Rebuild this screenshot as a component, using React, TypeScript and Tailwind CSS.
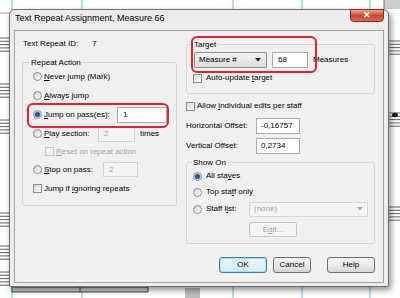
import React from "react";

const font = "font-['Liberation_Sans',Arial,sans-serif]";

function Radio({ checked = false }: { checked?: boolean }) {
  return (
    <span className="flex h-[9px] w-[9px] shrink-0 items-center justify-center rounded-full border border-[#8c8c8c] bg-linear-to-br from-[#d4d4d4] to-[#fbfbfb]">
      {checked && <span className="h-[5px] w-[5px] rounded-full bg-[#2a568c] shadow-[0_0_1px_1px_#9cc8e6]" />}
    </span>
  );
}

function Check({ disabled = false }: { disabled?: boolean }) {
  return disabled ? (
    <span className="h-[9px] w-[9px] shrink-0 border border-[#c8c8c8] bg-[#f2f2f2]" />
  ) : (
    <span className="h-[9px] w-[9px] shrink-0 border border-[#8c8c8c] bg-linear-to-br from-[#d8d8d8] to-[#fdfdfd]" />
  );
}

function U({ children }: { children: React.ReactNode }) {
  return <span className="underline decoration-[0.6px] underline-offset-[1px]">{children}</span>;
}

function Arrow({ color = "#222" }: { color?: string }) {
  return (
    <svg width="6" height="4" viewBox="0 0 6 4">
      <polygon points="0,0 6,0 3,3.5" fill={color} />
    </svg>
  );
}

function Score() {
  const staff = (x1: number, x2: number, y: number, k: string) =>
    [0, 1, 2, 3, 4].map((i) => (
      <line key={`${k}-${i}`} x1={x1} x2={x2} y1={y + i * 3.3} y2={y + i * 3.3} stroke="#3a3a3a" strokeWidth="0.8" />
    ));
  return (
    <svg className="absolute inset-0" width="400" height="298">
      <rect width="400" height="298" fill="#ffffff" />
      {[12, 82, 233, 302, 370].map((x) => (
        <line key={x} x1={x} x2={x} y1="0" y2="298" stroke="#62c9cf" strokeWidth="1" />
      ))}
      <line x1="0" x2="12" y1="13" y2="13" stroke="#888" strokeWidth="0.8" />
      {staff(0, 12, 38, "a")}
      {staff(0, 12, 84, "b")}
      {staff(0, 12, 120, "c")}
      {staff(0, 12, 213, "d")}
      {staff(0, 12, 246, "e")}
      {staff(0, 12, 272, "f")}
      {staff(386, 400, 41, "g")}
      {staff(386, 400, 113, "h")}
      {staff(386, 400, 207, "i")}
      <ellipse cx="395" cy="115" rx="3" ry="2.2" fill="#111" />
      <rect x="384" y="0" width="16" height="9" fill="#cfcfcf" />
      <line x1="384" x2="384" y1="0" y2="9" stroke="#777" />
      <rect x="12" y="287" width="136" height="5" fill="#cfcfcf" stroke="#222" strokeWidth="0.8" />
      <line x1="80" x2="80" y1="287" y2="292" stroke="#222" strokeWidth="0.8" />
      <rect x="185" y="288" width="15" height="10" fill="#bdbdbd" />
    </svg>
  );
}

export default function App() {
  return (
    <div className={`relative h-[298px] w-[400px] overflow-hidden bg-white text-[8px] leading-none text-black ${font}`}>
      <Score />
      <div className="absolute left-[9px] top-[9px] flex h-[278px] w-[380px] flex-col rounded-t-[6px] rounded-b-[2px] border border-[#707070] bg-[#ebecee] shadow-[2px_3px_6px_rgba(0,0,0,0.45)]">
        {/* title bar */}
        <div className="flex h-[20px] items-start justify-between">
          <span className="ml-[5px] mt-[3px] text-[9px] leading-[11px]">Text Repeat Assignment, Measure 66</span>
          <div className="-mt-px mr-[4px] flex h-[13px] w-[34px] items-center justify-center rounded-b-[4px] border border-[#8b2a1a] bg-linear-to-b from-[#eaa595] via-[#c9462f] to-[#d86a50] text-[9px] font-bold text-white">
            ✕
          </div>
        </div>
        {/* client */}
        <div className="mx-[4px] flex h-[253px] w-[370px] flex-col border border-[#a2a2a2] bg-[#f0f0f0]">
          <div className="flex pl-[7px] pt-[7px]">
            {/* left column */}
            <div className="flex w-[155px] flex-col">
              <div className="flex h-[12px] items-center pl-[1px]">
                <span>Text Repeat ID:</span>
                <span className="ml-[14px]">7</span>
              </div>
              <div className="relative mt-[12px] flex h-[144px] flex-col rounded-[3px] border border-[#d5d5d5] pl-[10px] pt-[4px]">
                <span className="absolute -top-[6px] left-[7px] bg-[#f0f0f0] px-[1px] leading-[11px]">Repeat Action</span>
                <div className="flex h-[19px] items-center gap-[2px]">
                  <Radio />
                  <span><U>N</U>ever jump (Mark)</span>
                </div>
                <div className="flex h-[19px] items-center gap-[2px]">
                  <Radio />
                  <span><U>A</U>lways jump</span>
                </div>
                <div className="flex h-[19px] items-center gap-[2px]">
                  <Radio checked />
                  <span className="w-[71px]"><U>J</U>ump on pass(es):</span>
                  <span className="flex h-[16px] w-[50px] items-center border border-[#abadb3] bg-white pl-[5px]">1</span>
                </div>
                <div className="flex h-[19px] items-center gap-[2px]">
                  <Radio />
                  <span className="w-[52px]"><U>P</U>lay section:</span>
                  <span className="flex h-[16px] w-[37px] items-center border border-[#d3d3d3] bg-[#f4f4f4] pl-[5px] text-[#a3a3a3]">2</span>
                  <span className="ml-[3px]">times</span>
                </div>
                <div className="flex h-[17px] items-center gap-[2px] pl-[12px]">
                  <Check disabled />
                  <span className="text-[#a3a3a3]"><U>R</U>eset on repeat action</span>
                </div>
                <div className="flex h-[19px] items-center gap-[2px]">
                  <Radio />
                  <span className="w-[57px]"><U>S</U>top on pass:</span>
                  <span className="flex h-[15px] w-[35px] items-center border border-[#d3d3d3] bg-[#f4f4f4] pl-[5px] text-[#a3a3a3]">2</span>
                </div>
                <div className="flex h-[19px] items-center gap-[2px]">
                  <Check />
                  <span>Jump if <U>i</U>gnoring repeats</span>
                </div>
                <div className="absolute left-[4px] top-[40px] h-[25px] w-[142px] rounded-[6px] border-2 border-[#e0262c]" />
              </div>
            </div>
            {/* right column */}
            <div className="relative ml-[9px] flex w-[189px] flex-col">
              <div className="relative mt-[6px] flex h-[50px] flex-col rounded-[3px] border border-[#d5d5d5] pl-[6px] pt-[7px]">
                <span className="absolute -top-[6px] left-[6px] bg-[#f0f0f0] px-[1px] leading-[11px]">Target</span>
                <div className="flex h-[16px] items-center">
                  <div className="ml-[1px] flex h-[16px] w-[73px] items-center justify-between rounded-[2px] border border-[#8e8f8f] bg-linear-to-b from-[#f4f4f4] to-[#dcdcdc] pl-[4px] pr-[5px]">
                    <span>Measure #</span>
                    <Arrow />
                  </div>
                  <span className="ml-[5px] flex h-[16px] w-[36px] items-center border border-[#abadb3] bg-white pl-[5px]">68</span>
                  <span className="ml-[5px]">Measures</span>
                </div>
                <div className="mt-[3px] flex h-[14px] items-center gap-[4px]">
                  <Check />
                  <span>Auto-update <U>t</U>arget</span>
                </div>
              </div>
              <div className="absolute left-[5px] -top-[2px] h-[37px] w-[126px] rounded-[6px] border-2 border-[#e0262c]" />
              <div className="mt-[6px] flex h-[12px] items-center gap-[2px]">
                <Check />
                <span>Allow <U>i</U>ndividual edits per staff</span>
              </div>
              <div className="mt-[6px] flex h-[16px] items-center">
                <span className="w-[70px]">Horizontal Offset:</span>
                <span className="flex h-[16px] w-[44px] items-center border border-[#abadb3] bg-white pl-[4px]">-0,16757</span>
              </div>
              <div className="mt-[4px] flex h-[16px] items-center">
                <span className="w-[70px]">Vertical Offset:</span>
                <span className="flex h-[16px] w-[44px] items-center border border-[#abadb3] bg-white pl-[4px]">0,2734</span>
              </div>
              <div className="relative mt-[8px] flex h-[82px] flex-col rounded-[3px] border border-[#d5d5d5] pl-[6px] pt-[7px]">
                <span className="absolute -top-[6px] left-[5px] bg-[#f0f0f0] px-[1px] leading-[11px]">Show On</span>
                <div className="flex h-[12px] items-center gap-[4px]">
                  <Radio checked />
                  <span>All sta<U>v</U>es</span>
                </div>
                <div className="mt-[4px] flex h-[12px] items-center gap-[4px]">
                  <Radio />
                  <span>Top sta<U>f</U>f only</span>
                </div>
                <div className="mt-[3px] flex h-[16px] items-center gap-[4px]">
                  <Radio />
                  <span className="w-[39px]">Staff l<U>i</U>st:</span>
                  <div className="flex h-[15px] w-[119px] items-center justify-between border border-[#d3d3d3] bg-[#f4f4f4] pl-[4px] pr-[4px] text-[#a3a3a3]">
                    <span>(none)</span>
                    <Arrow color="#a8a8a8" />
                  </div>
                </div>
                <div className="ml-[56px] mt-[5px] flex h-[15px] w-[48px] items-center justify-center rounded-[2px] border border-[#c3c6c9] bg-[#f4f4f4] text-[#a3a3a3]">
                  <span>E<U>d</U>it...</span>
                </div>
              </div>
            </div>
          </div>
          {/* buttons */}
          <div className="mt-[13px] flex justify-end pr-[8px]">
            <div className="flex h-[16px] w-[48px] items-center justify-center rounded-[3px] border border-[#3c7fb1] bg-linear-to-b from-[#eaf6fd] to-[#d5ecf9] shadow-[inset_0_0_0_1px_#a7e0f5]">OK</div>
            <div className="ml-[6px] flex h-[16px] w-[38px] items-center justify-center rounded-[3px] border border-[#707070] bg-linear-to-b from-[#f3f3f3] via-[#ebebeb] to-[#d6d6d6]">Cancel</div>
            <div className="ml-[16px] flex h-[16px] w-[48px] items-center justify-center rounded-[3px] border border-[#707070] bg-linear-to-b from-[#f3f3f3] via-[#ebebeb] to-[#d6d6d6]">Help</div>
          </div>
        </div>
      </div>
    </div>
  );
}
